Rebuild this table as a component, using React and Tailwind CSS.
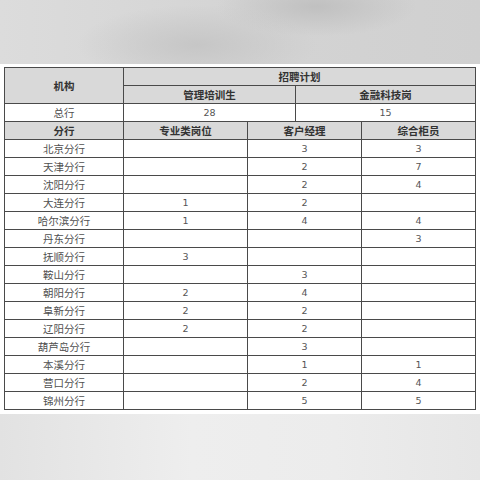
import React from "react";

const rows = [
  ["北京分行", "", "3", "3"],
  ["天津分行", "", "2", "7"],
  ["沈阳分行", "", "2", "4"],
  ["大连分行", "1", "2", ""],
  ["哈尔滨分行", "1", "4", "4"],
  ["丹东分行", "", "", "3"],
  ["抚顺分行", "3", "", ""],
  ["鞍山分行", "", "3", ""],
  ["朝阳分行", "2", "4", ""],
  ["阜新分行", "2", "2", ""],
  ["辽阳分行", "2", "2", ""],
  ["葫芦岛分行", "", "3", ""],
  ["本溪分行", "", "1", "1"],
  ["营口分行", "", "2", "4"],
  ["锦州分行", "", "5", "5"],
];

const cell = "border border-[#4a4a4a] h-[18px] p-0 text-center align-middle leading-[17px]";
const num = cell + " text-[9.5px] text-[#555] font-['DejaVu_Sans',sans-serif]";

export default function App() {
  return (
    <div
      className="w-[480px] h-[480px] flex flex-col bg-white text-[#505050] text-[10.5px]"
      style={{ fontFamily: '"Noto Sans CJK SC", "DejaVu Sans", sans-serif' }}
    >
      <div className="h-[64px] bg-[#d4d4d4] bg-[radial-gradient(ellipse_120px_40px_at_41%_70%,#c6c6c6_0%,transparent_100%),radial-gradient(ellipse_100px_30px_at_66%_10%,#c0c0c0_0%,transparent_100%),linear-gradient(90deg,#dcdcdc_0%,#d4d4d4_50%,#d0d0d0_100%)]" />
      <div className="pt-[3px] pl-[4px]">
        <table className="border-collapse table-fixed w-[471px]">
          <colgroup>
            <col className="w-[119px]" />
            <col className="w-[124px]" />
            <col className="w-[48px]" />
            <col className="w-[66px]" />
            <col className="w-[114px]" />
          </colgroup>
          <tbody>
            <tr className="bg-[#d9d9d9] font-bold text-[#333]">
              <td className={cell} rowSpan={2}>机构</td>
              <td className={cell} colSpan={4}>招聘计划</td>
            </tr>
            <tr className="bg-[#d9d9d9] font-bold text-[#333]">
              <td className={cell} colSpan={2}>管理培训生</td>
              <td className={cell} colSpan={2}>金融科技岗</td>
            </tr>
            <tr className="bg-white">
              <td className={cell}>总行</td>
              <td className={num} colSpan={2}>28</td>
              <td className={num} colSpan={2}>15</td>
            </tr>
            <tr className="bg-[#d9d9d9] font-bold text-[#333]">
              <td className={cell}>分行</td>
              <td className={cell}>专业类岗位</td>
              <td className={cell} colSpan={2}>客户经理</td>
              <td className={cell}>综合柜员</td>
            </tr>
            {rows.map((r) => (
              <tr key={r[0]} className="bg-white">
                <td className={cell}>{r[0]}</td>
                <td className={num}>{r[1]}</td>
                <td className={num} colSpan={2}>{r[2]}</td>
                <td className={num}>{r[3]}</td>
              </tr>
            ))}
          </tbody>
        </table>
      </div>
      <div className="mt-[4px] flex-1 bg-[linear-gradient(90deg,#e2e2e2_0%,#eeeeee_40%,#ececec_70%,#e6e6e6_100%)]" />
    </div>
  );
}
